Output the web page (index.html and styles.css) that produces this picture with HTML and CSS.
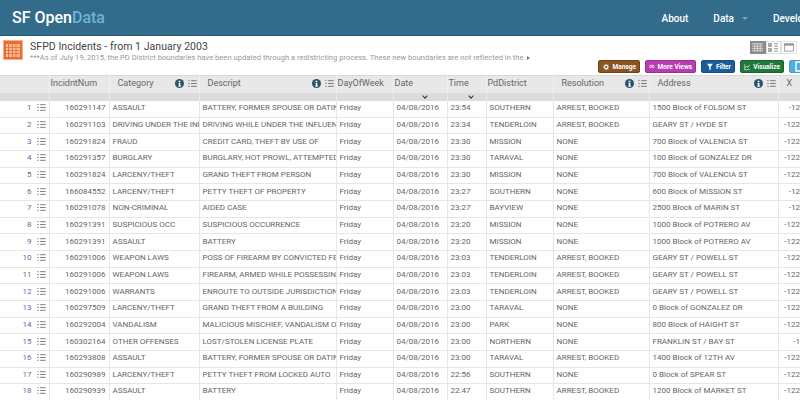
FILE: index.html
```html
<!DOCTYPE html>
<html lang="en">
<head>
    <meta charset="UTF-8">
    <title>SFPD Incidents - from 1 January 2003</title>
    <link rel="stylesheet" href="styles.css">
</head>
<body>
<svg class="defs" width="0" height="0">
    <symbol id="list" viewBox="0 0 12 10">
        <path d="M0 1h2M4 1h8M0 5h2M4 5h8M0 9h2M4 9h8" stroke="currentColor" stroke-width="1.2" fill="none"/>
    </symbol>
    <symbol id="info" viewBox="0 0 10 10">
        <circle cx="5" cy="5" r="5" fill="#2b5268"/>
        <path d="M4 2h2v1.5H4zM3.8 4.4H6v3.2h.6v.9H3.6v-.9h.6V5.3h-.4z" fill="#fff"/>
    </symbol>
</svg>
<div class="page">
    <div class="nav">
        <div class="logo">SF Open<span class="logo-data">Data</span></div>
        <ul class="nav-links">
            <li>About</li>
            <li class="has-caret">Data</li>
            <li>Developers</li>
        </ul>
    </div>

    <div class="title-bar">
        <svg class="dataset-icon" width="20" height="20" viewBox="0 0 20 20">
            <rect x="0.5" y="0.5" width="19" height="19" fill="#ee6b2f" stroke="#f5b08f"/>
            <path d="M6 4h11v13H6z" fill="#f7b795"/>
            <path d="M3 4h2v13H3z" fill="#f9c9ae"/>
            <path d="M3 7.5h14M3 10.5h14M3 13.5h14M9.5 4v13M13 4v13" stroke="#ee6b2f" stroke-width="0.8"/>
        </svg>
        <div class="title-text">
            <h1>SFPD Incidents - from 1 January 2003</h1>
            <p>***As of July 19, 2015, the PD District boundaries have been updated through a redistricting process. These new boundaries are not reflected in the <span class="more-arrow"></span></p>
        </div>
        <div class="tools">
            <div class="view-toggle">
                <span class="toggle-btn active">
                    <svg width="11" height="9" viewBox="0 0 12 9"><path d="M0 .5h12M0 3h12M0 5.5h12M0 8h12M3 0v9M6 0v9M9 0v9" stroke="#d8d8d8" stroke-width="1"/></svg>
                </span>
                <span class="toggle-btn">
                    <svg width="10" height="9" viewBox="0 0 10 9"><path d="M0 0h4v4H0zM6 0h4v1.2H6zM6 2.6h4v1.2H6zM0 5h4v4H0zM6 5h4v1.2H6zM6 7.6h4v1.2H6z" fill="#aaa"/></svg>
                </span>
                <span class="toggle-btn">
                    <svg width="10" height="9" viewBox="0 0 11 9"><path d="M.5.5h10v8H.5z" fill="none" stroke="#999"/><path d="M0 0h11v2.5H0z" fill="#999"/></svg>
                </span>
            </div>
            <div class="actions">
                <span class="btn btn-manage">
                    <svg width="10" height="10" viewBox="0 0 10 10"><circle cx="5" cy="5" r="2.6" fill="none" stroke="#fff" stroke-width="1.6"/><path d="M5 0v2M5 8v2M0 5h2M8 5h2M1.5 1.5L3 3M7 7l1.5 1.5M1.5 8.5L3 7M7 3l1.5-1.5" stroke="#fff" stroke-width="1.3"/></svg>
                    Manage
                </span>
                <span class="btn btn-views">
                    <svg width="11" height="7" viewBox="0 0 11 7"><circle cx="2.9" cy="3.8" r="2.1" fill="none" stroke="#fff" stroke-width="1.4"/><circle cx="8.1" cy="3.8" r="2.1" fill="none" stroke="#fff" stroke-width="1.4"/><path d="M2 1h7" stroke="#fff"/></svg>
                    More Views
                </span>
                <span class="btn btn-filter">
                    <svg width="9" height="10" viewBox="0 0 9 10"><path d="M0 0h9L5.6 4.5V10L3.4 8.6V4.5z" fill="#fff"/></svg>
                    Filter
                </span>
                <span class="btn btn-visualize">
                    <svg width="11" height="10" viewBox="0 0 11 10"><path d="M.5 0v9.5H11" fill="none" stroke="#fff"/><path d="M2 7l2-4 2.5 3L10 1" fill="none" stroke="#fff" stroke-width="1.2"/></svg>
                    Visualize
                </span>
                <span class="btn btn-export">
                    <svg width="11" height="11" viewBox="0 0 11 11"><path d="M1 1h6l2 2v7H1z" fill="none" stroke="#fff" stroke-width="1.4"/></svg>
                    Export
                </span>
            </div>
        </div>
    </div>

    <table class="grid">
        <colgroup>
            <col class="c-idx"><col class="c-num"><col class="c-cat"><col class="c-desc"><col class="c-day"><col class="c-date"><col class="c-time"><col class="c-dist"><col class="c-res"><col class="c-addr"><col class="c-x">
        </colgroup>
        <thead>
            <tr class="head">
                <th></th>
                <th class="th-tight">IncidntNum</th>
                <th><div class="th-in">Category<span class="th-icons"><svg class="i-info"><use href="#info"/></svg><svg class="i-list"><use href="#list"/></svg></span></div></th>
                <th><div class="th-in">Descript<span class="th-icons"><svg class="i-info"><use href="#info"/></svg><svg class="i-list"><use href="#list"/></svg></span></div></th>
                <th class="th-tight">DayOfWeek</th>
                <th class="th-tight">Date</th>
                <th class="th-tight">Time</th>
                <th class="th-tight">PdDistrict</th>
                <th><div class="th-in">Resolution<span class="th-icons"><svg class="i-info"><use href="#info"/></svg><svg class="i-list"><use href="#list"/></svg></span></div></th>
                <th><div class="th-in">Address<span class="th-icons"><svg class="i-info"><use href="#info"/></svg><svg class="i-list"><use href="#list"/></svg></span></div></th>
                <th>X</th>
            </tr>
            <tr class="sort">
                <td></td><td></td><td></td><td></td><td></td>
                <td><span class="chev chev-date"></span></td>
                <td><span class="chev chev-time"></span></td>
                <td></td><td></td><td></td><td></td>
            </tr>
        </thead>
        <tbody>
            <tr><td class="idx"><span>1</span><svg class="i-list"><use href="#list"/></svg></td><td class="num">160291147</td><td>ASSAULT</td><td>BATTERY, FORMER SPOUSE OR DATING RELATIONSHIP</td><td>Friday</td><td>04/08/2016</td><td>23:54</td><td>SOUTHERN</td><td>ARREST, BOOKED</td><td>1500 Block of FOLSOM ST</td><td class="coord">-122.41</td></tr>
            <tr><td class="idx"><span>2</span><svg class="i-list"><use href="#list"/></svg></td><td class="num">160291103</td><td>DRIVING UNDER THE INFLUENCE</td><td>DRIVING WHILE UNDER THE INFLUENCE OF ALCOHOL</td><td>Friday</td><td>04/08/2016</td><td>23:34</td><td>TENDERLOIN</td><td>ARREST, BOOKED</td><td>GEARY ST / HYDE ST</td><td class="coord">-122.416</td></tr>
            <tr><td class="idx"><span>3</span><svg class="i-list"><use href="#list"/></svg></td><td class="num">160291824</td><td>FRAUD</td><td>CREDIT CARD, THEFT BY USE OF</td><td>Friday</td><td>04/08/2016</td><td>23:30</td><td>MISSION</td><td>NONE</td><td>700 Block of VALENCIA ST</td><td class="coord">-122.421</td></tr>
            <tr><td class="idx"><span>4</span><svg class="i-list"><use href="#list"/></svg></td><td class="num">160291357</td><td>BURGLARY</td><td>BURGLARY, HOT PROWL, ATTEMPTED FORCIBLE</td><td>Friday</td><td>04/08/2016</td><td>23:30</td><td>TARAVAL</td><td>NONE</td><td>100 Block of GONZALEZ DR</td><td class="coord">-122.475</td></tr>
            <tr><td class="idx"><span>5</span><svg class="i-list"><use href="#list"/></svg></td><td class="num">160291824</td><td>LARCENY/THEFT</td><td>GRAND THEFT FROM PERSON</td><td>Friday</td><td>04/08/2016</td><td>23:30</td><td>MISSION</td><td>NONE</td><td>700 Block of VALENCIA ST</td><td class="coord">-122.421</td></tr>
            <tr><td class="idx"><span>6</span><svg class="i-list"><use href="#list"/></svg></td><td class="num">166084552</td><td>LARCENY/THEFT</td><td>PETTY THEFT OF PROPERTY</td><td>Friday</td><td>04/08/2016</td><td>23:27</td><td>SOUTHERN</td><td>NONE</td><td>600 Block of MISSION ST</td><td class="coord">-122.40</td></tr>
            <tr><td class="idx"><span>7</span><svg class="i-list"><use href="#list"/></svg></td><td class="num">160291078</td><td>NON-CRIMINAL</td><td>AIDED CASE</td><td>Friday</td><td>04/08/2016</td><td>23:27</td><td>BAYVIEW</td><td>NONE</td><td>2500 Block of MARIN ST</td><td class="coord">-122.39</td></tr>
            <tr><td class="idx"><span>8</span><svg class="i-list"><use href="#list"/></svg></td><td class="num">160291391</td><td>SUSPICIOUS OCC</td><td>SUSPICIOUS OCCURRENCE</td><td>Friday</td><td>04/08/2016</td><td>23:20</td><td>MISSION</td><td>NONE</td><td>1000 Block of POTRERO AV</td><td class="coord">-122.406</td></tr>
            <tr><td class="idx"><span>9</span><svg class="i-list"><use href="#list"/></svg></td><td class="num">160291391</td><td>ASSAULT</td><td>BATTERY</td><td>Friday</td><td>04/08/2016</td><td>23:20</td><td>MISSION</td><td>NONE</td><td>1000 Block of POTRERO AV</td><td class="coord">-122.406</td></tr>
            <tr><td class="idx"><span>10</span><svg class="i-list"><use href="#list"/></svg></td><td class="num">160291006</td><td>WEAPON LAWS</td><td>POSS OF FIREARM BY CONVICTED FELON</td><td>Friday</td><td>04/08/2016</td><td>23:03</td><td>TENDERLOIN</td><td>ARREST, BOOKED</td><td>GEARY ST / POWELL ST</td><td class="coord">-122.408</td></tr>
            <tr><td class="idx"><span>11</span><svg class="i-list"><use href="#list"/></svg></td><td class="num">160291006</td><td>WEAPON LAWS</td><td>FIREARM, ARMED WHILE POSSESSING</td><td>Friday</td><td>04/08/2016</td><td>23:03</td><td>TENDERLOIN</td><td>ARREST, BOOKED</td><td>GEARY ST / POWELL ST</td><td class="coord">-122.408</td></tr>
            <tr><td class="idx"><span>12</span><svg class="i-list"><use href="#list"/></svg></td><td class="num">160291006</td><td>WARRANTS</td><td>ENROUTE TO OUTSIDE JURISDICTION</td><td>Friday</td><td>04/08/2016</td><td>23:03</td><td>TENDERLOIN</td><td>ARREST, BOOKED</td><td>GEARY ST / POWELL ST</td><td class="coord">-122.408</td></tr>
            <tr><td class="idx"><span>13</span><svg class="i-list"><use href="#list"/></svg></td><td class="num">160297509</td><td>LARCENY/THEFT</td><td>GRAND THEFT FROM A BUILDING</td><td>Friday</td><td>04/08/2016</td><td>23:00</td><td>TARAVAL</td><td>NONE</td><td>0 Block of GONZALEZ DR</td><td class="coord">-122.475</td></tr>
            <tr><td class="idx"><span>14</span><svg class="i-list"><use href="#list"/></svg></td><td class="num">160292004</td><td>VANDALISM</td><td>MALICIOUS MISCHIEF, VANDALISM OF</td><td>Friday</td><td>04/08/2016</td><td>23:00</td><td>PARK</td><td>NONE</td><td>800 Block of HAIGHT ST</td><td class="coord">-122.433</td></tr>
            <tr><td class="idx"><span>15</span><svg class="i-list"><use href="#list"/></svg></td><td class="num">160302164</td><td>OTHER OFFENSES</td><td>LOST/STOLEN LICENSE PLATE</td><td>Friday</td><td>04/08/2016</td><td>23:00</td><td>NORTHERN</td><td>NONE</td><td>FRANKLIN ST / BAY ST</td><td class="coord">-122.4</td></tr>
            <tr><td class="idx"><span>16</span><svg class="i-list"><use href="#list"/></svg></td><td class="num">160293808</td><td>ASSAULT</td><td>BATTERY, FORMER SPOUSE OR DATING RELATIONSHIP</td><td>Friday</td><td>04/08/2016</td><td>23:00</td><td>TARAVAL</td><td>ARREST, BOOKED</td><td>1400 Block of 12TH AV</td><td class="coord">-122.470</td></tr>
            <tr><td class="idx"><span>17</span><svg class="i-list"><use href="#list"/></svg></td><td class="num">160290989</td><td>LARCENY/THEFT</td><td>PETTY THEFT FROM LOCKED AUTO</td><td>Friday</td><td>04/08/2016</td><td>22:56</td><td>SOUTHERN</td><td>NONE</td><td>0 Block of SPEAR ST</td><td class="coord">-122.394</td></tr>
            <tr><td class="idx"><span>18</span><svg class="i-list"><use href="#list"/></svg></td><td class="num">160290939</td><td>ASSAULT</td><td>BATTERY</td><td>Friday</td><td>04/08/2016</td><td>22:47</td><td>SOUTHERN</td><td>ARREST, BOOKED</td><td>1200 Block of MARKET ST</td><td class="coord">-122.413</td></tr>
        </tbody>
    </table>
</div>
</body>
</html>
```

FILE: styles.css
```css
* {
    margin: 0;
    padding: 0;
    box-sizing: border-box;
}
html, body {
    height: 400px;
    overflow: hidden;
}
body {
    font-family: Roboto, "Liberation Sans", sans-serif;
    color: #555;
    background: #fff;
}
.defs {
    position: absolute;
}
.page {
    width: 830px;
}

/* top bar */
.nav {
    display: flex;
    align-items: center;
    justify-content: space-between;
    height: 36px;
    padding: 0 0 0 12px;
    background: #336b8b;
    border-bottom: 1px solid #2a5a75;
    color: #fff;
}
.logo {
    font-size: 16px;
    font-weight: 500;
    padding-bottom: 1px;
}
.logo-data {
    color: #6db3d8;
}
.nav-links {
    display: flex;
    list-style: none;
    font-size: 10px;
    font-weight: 500;
    padding-top: 1px;
}
.nav-links li {
    margin-right: 25px;
}
.nav-links li:last-child {
    margin-right: 0;
    width: 57px;
}
.has-caret {
    display: flex;
    align-items: center;
}
.has-caret::after {
    content: "";
    margin-left: 8px;
    border-left: 3px solid transparent;
    border-right: 3px solid transparent;
    border-top: 3px solid #7ea3b8;
}

/* title area */
.title-bar {
    display: flex;
    height: 39px;
    padding: 4px 0 0 3px;
}
.dataset-icon {
    flex: none;
    margin-right: 7px;
}
.title-text {
    flex: none;
    width: 520px;
    padding-top: 1px;
}
.title-text h1 {
    font-size: 10.5px;
    font-weight: 400;
    line-height: 12px;
    color: #444;
    letter-spacing: 0.05px;
}
.title-text p {
    font-size: 7.5px;
    line-height: 10px;
    color: #999;
    white-space: nowrap;
    letter-spacing: 0.04px;
}
.more-arrow {
    display: inline-block;
    margin-left: 2px;
    border-left: 3px solid #777;
    border-top: 2.5px solid transparent;
    border-bottom: 2.5px solid transparent;
}
.tools {
    flex: 1;
    position: relative;
}
.view-toggle {
    position: absolute;
    top: 1px;
    left: 200px;
    display: flex;
}
.toggle-btn {
    display: flex;
    align-items: center;
    justify-content: center;
    width: 15.5px;
    height: 13px;
    background: #fff;
    border: 1px solid #e2e2e2;
}
.toggle-btn.active {
    background: #8c8c8c;
    border-color: #8c8c8c;
}
.actions {
    position: absolute;
    top: 20px;
    left: 48px;
    display: flex;
    gap: 5px;
}
.btn {
    display: flex;
    align-items: center;
    gap: 3px;
    height: 13px;
    padding: 0 3px 0 5px;
    border-radius: 2px;
    border: 1px solid;
    font-size: 6.5px;
    font-weight: 700;
    color: #fff;
    white-space: nowrap;
}
.btn-manage { width: 42px; background: #8a5320; border-color: #6f4318; padding-left: 4px; }
.btn-views { width: 51px; background: #b93cb0; border-color: #9c2f95; padding-left: 3px; }
.btn-filter { width: 34px; background: #1c5c9c; border-color: #174d83; }
.btn-visualize { width: 44px; background: #1f7a3a; border-color: #17622e; padding-left: 3px; }
.btn-export { background: #4fb0e0; border-color: #3fa0d0; }

/* grid */
.grid {
    width: 830px;
    table-layout: fixed;
    border-collapse: collapse;
}
.c-idx { width: 49px; }
.c-num { width: 60px; }
.c-cat { width: 90px; }
.c-desc { width: 137px; }
.c-day { width: 57px; }
.c-date { width: 54px; }
.c-time { width: 39px; }
.c-dist { width: 67px; }
.c-res { width: 96px; }
.c-addr { width: 129px; }
.c-x { width: 52px; }
.head {
    height: 17px;
    background: #e8e8e8;
    border-top: 1px solid #d8d8d8;
}
.head th {
    padding: 0 0 2px 8px;
    font-size: 9px;
    font-weight: 400;
    text-align: left;
    color: #666;
    white-space: nowrap;
    border-right: 1px solid #f0f0f0;
}
.head .th-tight {
    padding-left: 1px;
}
.th-in {
    display: flex;
    align-items: center;
    justify-content: space-between;
    padding-right: 2px;
}
.th-icons {
    display: flex;
    align-items: center;
    gap: 4px;
}
.i-info {
    width: 9px;
    height: 9px;
}
.i-list {
    width: 9px;
    height: 7px;
    color: #666;
}
.sort {
    height: 8px;
    background: #dcdcdc;
}
.sort td {
    border-right: 1px solid #e8e8e8;
}
.chev {
    display: block;
    width: 4px;
    height: 4px;
    margin-top: -1px;
    border-right: 1px solid #333;
    border-bottom: 1px solid #333;
    transform: rotate(45deg);
}
.chev-date {
    margin-left: 29px;
}
.chev-time {
    margin-left: 21px;
}
tbody tr {
    height: 16.67px;
    border-bottom: 1px solid #e6e6e6;
}
tbody td {
    padding: 0 0 1px 3px;
    font-size: 8px;
    line-height: 12px;
    color: #666;
    white-space: nowrap;
    overflow: hidden;
    border-right: 1px solid #e6e6e6;
}
tbody .idx {
    padding: 0 3px 1px 0;
    text-align: right;
    color: #5a6f9c;
}
.idx span {
    margin-right: 5px;
}
.idx .i-list {
    vertical-align: -1px;
}
tbody .num {
    text-align: right;
    padding-right: 3px;
}
tbody .coord {
    text-align: right;
    padding-right: 14px;
}
```
